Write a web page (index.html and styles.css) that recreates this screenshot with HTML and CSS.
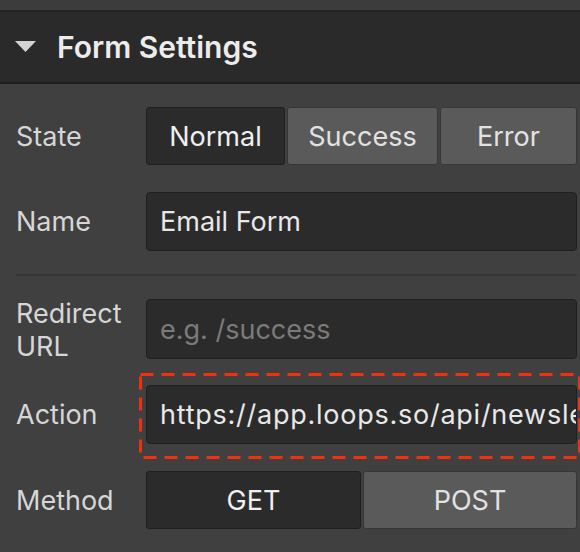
FILE: index.html
```html
<!DOCTYPE html>
<html>
<head>
<meta charset="utf-8">
<link rel="stylesheet" href="styles.css">
</head>
<body>
<div class="panel">
  <div class="topband"></div>
  <div class="header">
    <svg class="caret" width="22" height="12" viewBox="0 0 22 12"><path d="M0 0 H21 L10.5 11 Z" fill="#d4d4d4"/></svg>
    <span class="title">Form Settings</span>
  </div>
  <div class="body">
    <div class="row r-state">
      <div class="label">State</div>
      <div class="seg seg3">
        <div class="btn active">Normal</div>
        <div class="btn">Success</div>
        <div class="btn">Error</div>
      </div>
    </div>
    <div class="row r-name">
      <div class="label">Name</div>
      <div class="input">Email Form</div>
    </div>
    <div class="sep"></div>
    <div class="row r-redirect">
      <div class="label two">Redirect<br>URL</div>
      <div class="input placeholder">e.g. /success</div>
    </div>
    <div class="row r-action">
      <div class="label">Action</div>
      <div class="input clip">https://app.loops.so/api/newsletter-form/clxyz</div>
      <svg class="highlight"><rect x="1.5" y="1.5"/></svg>
    </div>
    <div class="row r-method">
      <div class="label">Method</div>
      <div class="seg seg2">
        <div class="btn active">GET</div>
        <div class="btn">POST</div>
      </div>
    </div>
  </div>
</div>
</body>
</html>
```

FILE: styles.css
```css
* { box-sizing: border-box; }
html, body { margin: 0; padding: 0; }
body {
  width: 580px;
  height: 552px;
  overflow: hidden;
  background: #404040;
  font-family: Inter, "Noto Sans", sans-serif;
  color: #e6e6e6;
}
.panel { width: 580px; }
.topband {
  height: 12px;
  background: #3c3c3c;
  border-bottom: 2px solid #232323;
}
.header {
  height: 72px;
  background: #2a2a2a;
  border-bottom: 2px solid #1f1f1f;
  display: flex;
  align-items: center;
  padding-left: 15px;
}
.caret { margin-right: 20px; }
.title {
  font-size: 30px;
  font-weight: 600;
  color: #ececec;
}
.body {
  padding: 23px 3px 0 16px;
  display: flex;
  flex-direction: column;
}
.row {
  display: grid;
  grid-template-columns: 130px 1fr;
  align-items: center;
  position: relative;
}
.r-state { margin-bottom: 27px; }
.r-redirect { margin-bottom: 26px; }
.r-action { margin-bottom: 27px; }
.label {
  font-size: 27px;
  color: #d6d6d6;
  line-height: 33px;
}
.label.two { margin: -2px 0 -4px; }
.seg {
  display: grid;
  gap: 2px;
  height: 58px;
}
.seg3 { grid-template-columns: 139px 151px 1fr; }
.seg2 { grid-template-columns: 215px 1fr; }
.btn {
  display: flex;
  align-items: center;
  justify-content: center;
  font-size: 27px;
  color: #e2e2e2;
  background: #5a5a5a;
  border: 1px solid #363636;
  border-radius: 3px;
}
.btn.active {
  background: #2b2b2b;
  border-color: #1f1f1f;
  color: #efefef;
}
.input {
  height: 59px;
  background: #2b2b2b;
  border: 1px solid #1f1f1f;
  border-radius: 4px;
  display: flex;
  align-items: center;
  padding-left: 13px;
  font-size: 27px;
  color: #e8e8e8;
  white-space: nowrap;
  overflow: hidden;
}
.input.placeholder { color: #7b7b7b; height: 60px; }
.input.clip { padding-right: 4px; letter-spacing: 0.75px; }
.sep {
  height: 2px;
  background: #363636;
  margin: 23px 0 23px 0;
}
.highlight {
  position: absolute;
  left: 123px;
  top: -12px;
  width: 442px;
  height: 86px;
  overflow: visible;
  pointer-events: none;
}
.highlight rect {
  width: calc(100% - 3px);
  height: calc(100% - 3px);
  fill: none;
  stroke: #f0300f;
  stroke-width: 3;
  stroke-dasharray: 13 8;
}
```
